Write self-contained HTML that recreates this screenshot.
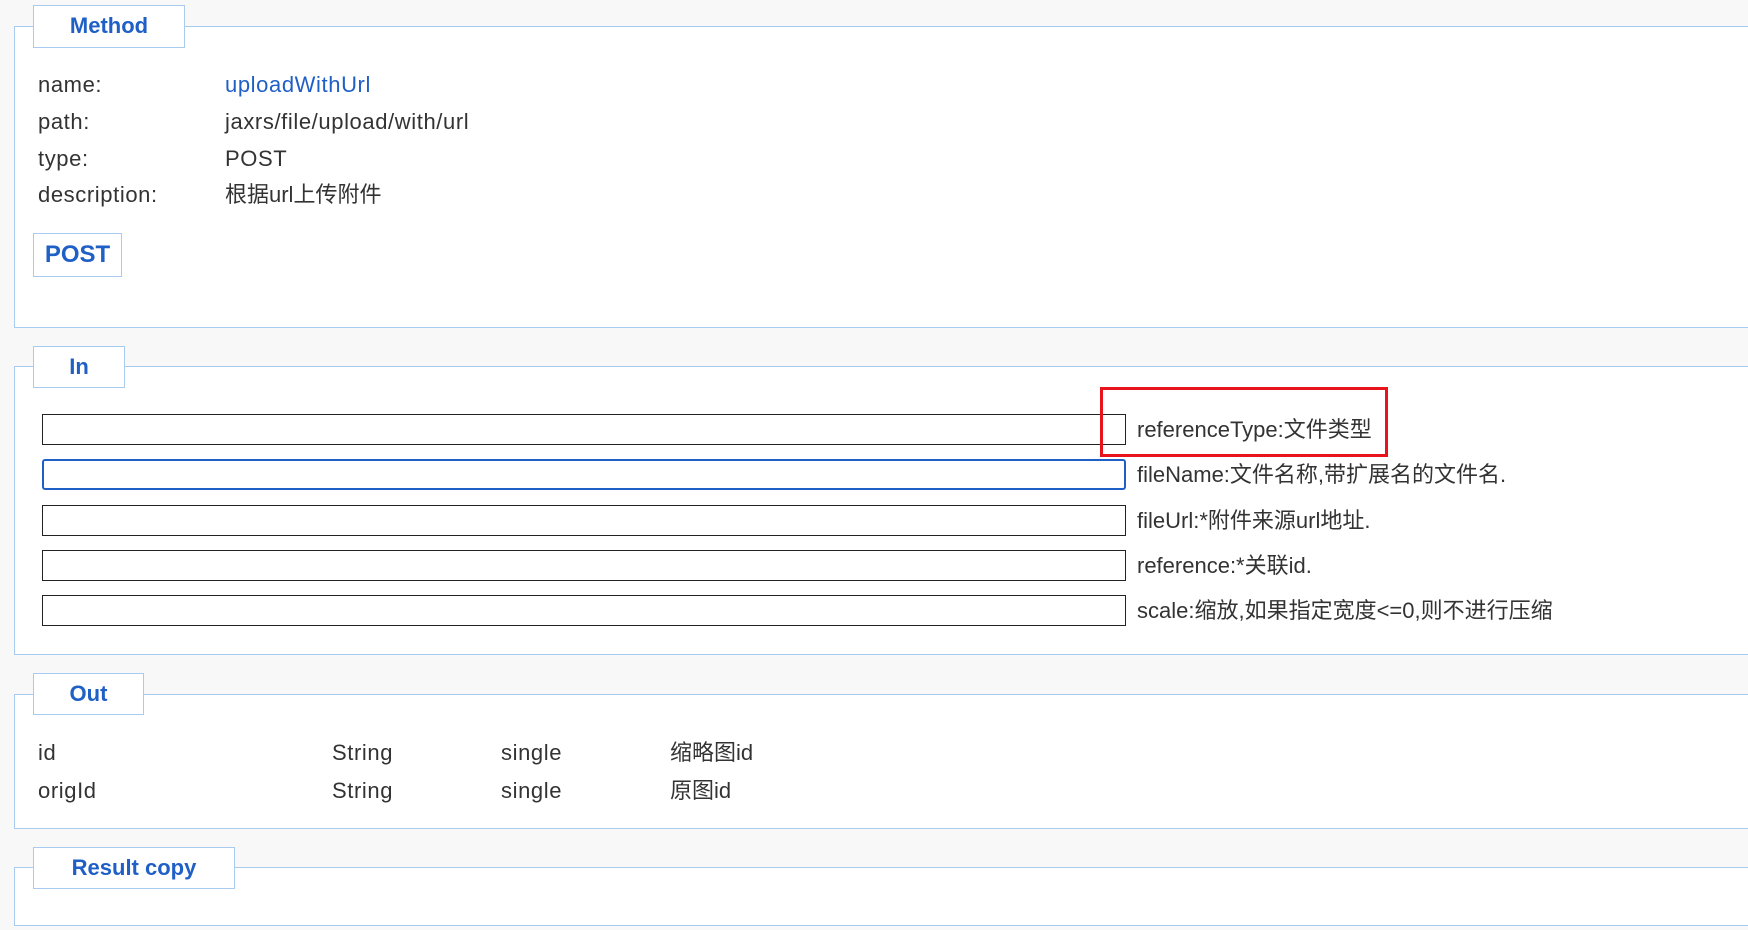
<!DOCTYPE html>
<html><head><meta charset="utf-8"><style>
body{margin:0;width:1748px;height:930px;background:#f8f8f8;position:relative;overflow:hidden;font-family:"Liberation Sans","Noto Sans CJK SC",sans-serif;color:#333;font-size:22px}
.fs{position:absolute;left:14px;right:-2px;background:#fff;border:1.5px solid #a9cbf0}
.lg{position:absolute;left:33px;background:#fff;border:1.5px solid #a9cbf0;color:#1f5fc6;font-weight:bold;font-size:22px;text-align:center;box-sizing:border-box}
.t{position:absolute;white-space:nowrap;line-height:24px}
.l{letter-spacing:0.6px}
.in{position:absolute;left:42px;width:1084px;height:31px;border:1px solid #222;box-sizing:border-box}
</style></head><body>
<div class="fs" style="top:26px;height:300px"></div>
<div class="lg" style="top:5px;width:152px;height:43px;line-height:40px">Method</div>
<div class="t l" style="left:38px;top:73px">name:</div><div class="t l" style="left:225px;top:73px;color:#1f5fc6">uploadWithUrl</div>
<div class="t l" style="left:38px;top:110px">path:</div><div class="t l" style="left:225px;top:110px">jaxrs/file/upload/with/url</div>
<div class="t l" style="left:38px;top:147px">type:</div><div class="t l" style="left:225px;top:147px">POST</div>
<div class="t l" style="left:38px;top:183px">description:</div><div class="t" style="left:225px;top:183px">根据url上传附件</div>
<div class="lg" style="top:233px;width:89px;height:44px;line-height:41px;font-size:24px">POST</div>

<div class="fs" style="top:366px;height:287px"></div>
<div class="lg" style="top:346px;width:92px;height:42px;line-height:39px">In</div>
<div class="in" style="top:414px"></div>
<div class="in" style="top:459px;border:2px solid #1f5fc6;border-radius:3px"></div>
<div class="in" style="top:505px"></div>
<div class="in" style="top:550px"></div>
<div class="in" style="top:595px"></div>
<div class="t" style="left:1137px;top:418px">referenceType:文件类型</div>
<div class="t" style="left:1137px;top:463px">fileName:文件名称,带扩展名的文件名.</div>
<div class="t" style="left:1137px;top:509px">fileUrl:*附件来源url地址.</div>
<div class="t" style="left:1137px;top:554px">reference:*关联id.</div>
<div class="t" style="left:1137px;top:599px">scale:缩放,如果指定宽度&lt;=0,则不进行压缩</div>
<div style="position:absolute;left:1100px;top:387px;width:288px;height:70px;border:3px solid #e8141b;box-sizing:border-box"></div>

<div class="fs" style="top:694px;height:133px"></div>
<div class="lg" style="top:673px;width:111px;height:42px;line-height:39px">Out</div>
<div class="t l" style="left:38px;top:741px">id</div><div class="t l" style="left:332px;top:741px">String</div><div class="t l" style="left:501px;top:741px">single</div><div class="t" style="left:670px;top:741px">缩略图id</div>
<div class="t l" style="left:38px;top:779px">origId</div><div class="t l" style="left:332px;top:779px">String</div><div class="t l" style="left:501px;top:779px">single</div><div class="t" style="left:670px;top:779px">原图id</div>

<div class="fs" style="top:867px;height:57px"></div>
<div class="lg" style="top:847px;width:202px;height:42px;line-height:39px">Result copy</div>
</body></html>
